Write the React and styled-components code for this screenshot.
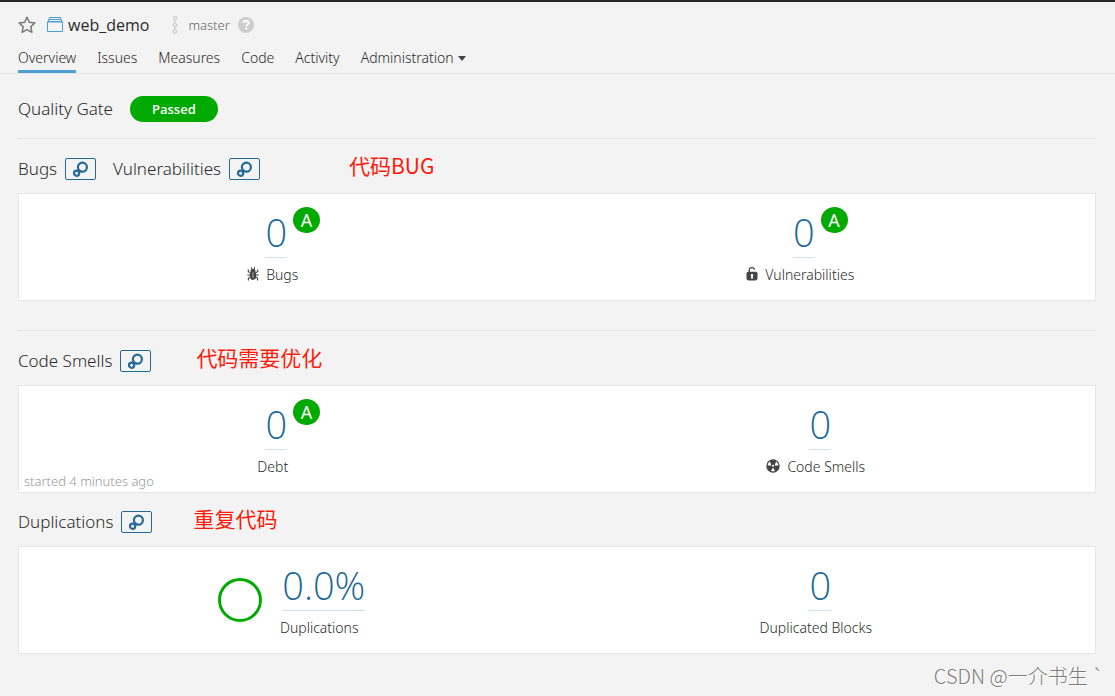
import React from 'react';
import styled, { createGlobalStyle } from 'styled-components';

const GlobalStyle = createGlobalStyle`
  * {
    box-sizing: border-box;
  }
  body {
    margin: 0;
    background: #f3f3f3;
    color: #2a2a2a;
    font-family: "Noto Sans", "Open Sans", "Noto Sans CJK SC", sans-serif;
    font-size: 14px;
    font-weight: 300;
    line-height: 20px;
  }
  a {
    color: inherit;
    text-decoration: none;
  }
  svg {
    display: block;
    flex: none;
  }
`;

const Header = styled.header`
  padding: 12px 18px 0;
  border-top: 2px solid #262626;
  border-bottom: 1px solid #e6e6e6;
`;

const ProjectBar = styled.div`
  display: flex;
  align-items: center;
  height: 22px;
`;

const IconButton = styled.button`
  display: flex;
  padding: 0;
  border: 0;
  background: none;
`;

const ProjectName = styled.h1`
  display: flex;
  align-items: center;
  gap: 5px;
  margin: 0 23px 0 11px;
  font-family: "Open Sans", sans-serif;
  font-size: 16px;
  font-weight: 500;
  line-height: 22px;
`;

const Branch = styled.span`
  margin: 0 8px 0 10px;
  color: #666;
  font-size: 13px;
`;

const Tabs = styled.nav`
  display: flex;
  gap: 21px;
  margin-top: 6px;
`;

const Tab = styled.a`
  height: 31px;
  padding-top: 6px;
  border-bottom: 3px solid ${({ $active }) => ($active ? '#4b9fd5' : 'transparent')};
`;

const MenuTab = styled.button`
  display: flex;
  align-items: center;
  gap: 4px;
  height: 31px;
  padding: 1px 0 0;
  border: 0;
  background: none;
  color: inherit;
  font: inherit;
`;

const Main = styled.main`
  padding: 0 19px 0 18px;
`;

const GateBar = styled.section`
  display: flex;
  align-items: center;
  gap: 17px;
  height: 65px;
  padding-top: 6px;
  border-bottom: 1px solid #e6e6e6;
`;

const Heading = styled.h2`
  margin: 0;
  font-size: 17px;
  font-weight: 300;
  line-height: 24px;
`;

const Level = styled.span`
  height: 26px;
  padding: 0 22px;
  border-radius: 13px;
  background: #0a0;
  color: #fff;
  font-family: "Open Sans", sans-serif;
  font-size: 13px;
  font-weight: 600;
  line-height: 26px;
`;

const Section = styled.section`
  padding-top: ${({ $compact }) => ($compact ? 18 : 19)}px;
  padding-bottom: ${({ $divided }) => ($divided ? 29 : 0)}px;
  border-bottom: ${({ $divided }) => ($divided ? '1px solid #e6e6e6' : '0')};
`;

const TitleRow = styled.div`
  display: flex;
  align-items: center;
  gap: 17px;
  height: 22px;
  margin-bottom: 13px;
`;

const Title = styled.div`
  display: flex;
  align-items: center;
  gap: 8px;
`;

const LeakLink = styled.a`
  display: flex;
  align-items: center;
  justify-content: center;
  width: 31px;
  height: 22px;
  border: 1px solid #236a97;
  border-radius: 2px;
  color: #236a97;
`;

const Note = styled.span`
  margin-left: ${({ $indent }) => $indent}px;
  padding-bottom: 8px;
  color: #ff1a0a;
  font-family: "Noto Sans CJK SC", sans-serif;
  font-size: 21px;
  font-weight: 400;
  line-height: 26px;
`;

const Card = styled.div`
  position: relative;
  display: flex;
  height: 108px;
  padding: 0 11px 0 10px;
  border: 1px solid #e6e6e6;
  background: #fff;
`;

const Measure = styled.div`
  display: flex;
  flex: 1;
  justify-content: center;
  gap: 18px;
  padding-top: 13px;
`;

const MeasureBody = styled.div`
  display: flex;
  flex-direction: column;
  align-items: center;
`;

const ValueRow = styled.div`
  display: flex;
  align-items: flex-start;
  gap: 6px;
`;

const Value = styled.a`
  height: 51px;
  border-bottom: 1px solid #cae3f2;
  color: #236a97;
  font-family: "Open Sans", sans-serif;
  font-size: 38px;
  line-height: 50px;
`;

const Rating = styled.a`
  width: 27px;
  height: 26px;
  border-radius: 50%;
  background: #0a0;
  color: #fff;
  font-size: 18px;
  font-weight: 400;
  line-height: 26px;
  text-align: center;
`;

const Label = styled.div`
  display: flex;
  align-items: center;
  gap: 7px;
  margin-top: 7px;
  padding-right: ${({ $rated }) => ($rated ? 40 : 9)}px;
`;

const Ring = styled.span`
  width: 44px;
  height: 44px;
  margin-top: 18px;
  border: 3px solid #0a0;
  border-radius: 50%;
`;

const Started = styled.span`
  position: absolute;
  left: 5px;
  bottom: 1px;
  color: #999;
  font-size: 13px;
`;

const Footer = styled.footer`
  padding: 8px 11px 6px;
  color: #7c7c7c;
  font-family: "Noto Sans CJK SC", sans-serif;
  font-size: 20px;
  line-height: 28px;
  text-align: right;
  text-shadow: 1px 1px 0 #fff;
`;

const StarIcon = () => (
  <svg width="18" height="18" viewBox="0 0 18 18" fill="none" stroke="#777" strokeWidth="1.5" strokeLinejoin="round">
    <path d="M9 1.2l2.3 5.1 5.6.6-4.1 3.8 1.1 5.6L9 13.6l-4.9 2.7 1.1-5.6L1.1 6.9l5.6-.6z" />
  </svg>
);

const ProjectIcon = () => (
  <svg width="16" height="16" viewBox="0 0 16 16" fill="none" stroke="#4b9fd5">
    <path d="M2.5 3V.5h11V3M1.5 5V2.5h13V5M.5 4.5h15v10H.5z" />
    <path d="M.5 5.5h15" strokeOpacity=".5" />
  </svg>
);

const BranchIcon = () => (
  <svg width="6" height="20" viewBox="0 0 6 20" fill="none" stroke="#cdcdcd" strokeWidth="1.2">
    <circle cx="3" cy="3" r="1.7" />
    <circle cx="3" cy="10" r="1.7" />
    <circle cx="3" cy="16.5" r="1.7" />
    <path d="M3 4.8v3.4M3 11.8v3" />
  </svg>
);

const HelpIcon = () => (
  <svg width="16" height="16" viewBox="0 0 16 16">
    <circle cx="8" cy="8" r="8" fill="#cdcdcd" />
    <path d="M5.5 6.1c.1-1.6 1.1-2.4 2.6-2.4s2.5.8 2.5 2.1c0 1.7-2.3 1.7-2.3 3.4" fill="none" stroke="#fff" strokeWidth="1.9" />
    <path d="M7.3 10.6h2v2h-2z" fill="#fff" />
  </svg>
);

const CaretIcon = () => (
  <svg width="8" height="5" viewBox="0 0 8 5">
    <path d="M0 0h8L4 5z" fill="#444" />
  </svg>
);

const LeakIcon = () => (
  <svg width="17" height="18" viewBox="0 0 17 18" fill="none" stroke="currentColor">
    <circle cx="10.4" cy="7.2" r="4.5" strokeWidth="2.2" />
    <circle cx="4.6" cy="13.2" r="2.6" strokeWidth="2.2" />
  </svg>
);

const BugIcon = () => (
  <svg width="12" height="16" viewBox="0 0 12 16" fill="none" stroke="#444">
    <path d="M3.2 4.3C3.6 2.6 4.6 2 6 2s2.4.6 2.8 2.3z" fill="#444" stroke="none" />
    <path d="M4.2.4L5 2.4M7.8.4L7 2.4M3 5.6L1.3 4.7V2.5M9 5.6l1.7-.9V2.5M3 8H.3M9 8h2.7M3.1 10.2l-1.7 1V13.5M8.9 10.2l1.7 1V13.5" strokeWidth="1.1" />
    <ellipse cx="6" cy="8.2" rx="3.2" ry="4.8" fill="#444" stroke="none" />
    <path d="M6 5.5v5.5" stroke="#aaa" strokeWidth="1.1" />
  </svg>
);

const LockIcon = () => (
  <svg width="12" height="16" viewBox="0 0 12 16">
    <path d="M3.2 6V2.9C3.2 1.4 4.3.7 5.8.7s2.5.7 2.6 2" fill="none" stroke="#444" strokeWidth="1.3" />
    <rect x=".5" y="4.8" width="11" height="8.6" rx="1.8" fill="#444" />
    <path d="M6 6.9a1.4 1.4 0 0 1 .8 2.5l.3 2H4.9l.3-2A1.4 1.4 0 0 1 6 6.9z" fill="#fff" />
  </svg>
);

const SmellIcon = () => (
  <svg width="14" height="16" viewBox="0 0 14 16">
    <circle cx="7" cy="7" r="6.7" fill="#444" />
    <path d="M5.4 6.4H1.7c.2-1.7 1-3 2.2-3.8zM8.6 6.4h3.7c-.2-1.7-1-3-2.2-3.8zM7 8.4l2 3.5c-1.3.6-2.7.6-4 0z" fill="#fff" />
    <circle cx="7" cy="6.8" r="1" fill="#fff" />
  </svg>
);

const TitleLink = ({ children }) => (
  <Title>
    <Heading>{children}</Heading>
    <LeakLink href="#leak" aria-label={`${children} details`}>
      <LeakIcon />
    </LeakLink>
  </Title>
);

const MeasureBox = ({ value, label, rating, icon, ring }) => (
  <Measure>
    {ring && <Ring />}
    <MeasureBody>
      <ValueRow>
        <Value href="#measure">{value}</Value>
        {rating && <Rating href="#rating">{rating}</Rating>}
      </ValueRow>
      <Label $rated={Boolean(rating)}>
        {icon}
        <span>{label}</span>
      </Label>
    </MeasureBody>
  </Measure>
);

const App = () => {
  return (
    <>
      <GlobalStyle />
      <Header>
        <ProjectBar>
          <IconButton aria-label="Favorite">
            <StarIcon />
          </IconButton>
          <ProjectName>
            <ProjectIcon />
            <a href="#project">web_demo</a>
          </ProjectName>
          <BranchIcon />
          <Branch>master</Branch>
          <IconButton aria-label="Help">
            <HelpIcon />
          </IconButton>
        </ProjectBar>
        <Tabs>
          <Tab href="#overview" $active>Overview</Tab>
          <Tab href="#issues">Issues</Tab>
          <Tab href="#measures">Measures</Tab>
          <Tab href="#code">Code</Tab>
          <Tab href="#activity">Activity</Tab>
          <MenuTab>
            Administration
            <CaretIcon />
          </MenuTab>
        </Tabs>
      </Header>

      <Main>
        <GateBar>
          <Heading>Quality Gate</Heading>
          <Level>Passed</Level>
        </GateBar>

        <Section $divided>
          <TitleRow>
            <TitleLink>Bugs</TitleLink>
            <TitleLink>Vulnerabilities</TitleLink>
            <Note $indent={72}>代码BUG</Note>
          </TitleRow>
          <Card>
            <MeasureBox value="0" label="Bugs" rating="A" icon={<BugIcon />} />
            <MeasureBox value="0" label="Vulnerabilities" rating="A" icon={<LockIcon />} />
          </Card>
        </Section>

        <Section>
          <TitleRow>
            <TitleLink>Code Smells</TitleLink>
            <Note $indent={28}>代码需要优化</Note>
          </TitleRow>
          <Card>
            <MeasureBox value="0" label="Debt" rating="A" />
            <MeasureBox value="0" label="Code Smells" icon={<SmellIcon />} />
            <Started>started 4 minutes ago</Started>
          </Card>
        </Section>

        <Section $compact>
          <TitleRow>
            <TitleLink>Duplications</TitleLink>
            <Note $indent={24}>重复代码</Note>
          </TitleRow>
          <Card>
            <MeasureBox value="0.0%" label="Duplications" ring />
            <MeasureBox value="0" label="Duplicated Blocks" />
          </Card>
        </Section>
      </Main>

      <Footer>CSDN @一介书生 `</Footer>
    </>
  );
};

export default App;
